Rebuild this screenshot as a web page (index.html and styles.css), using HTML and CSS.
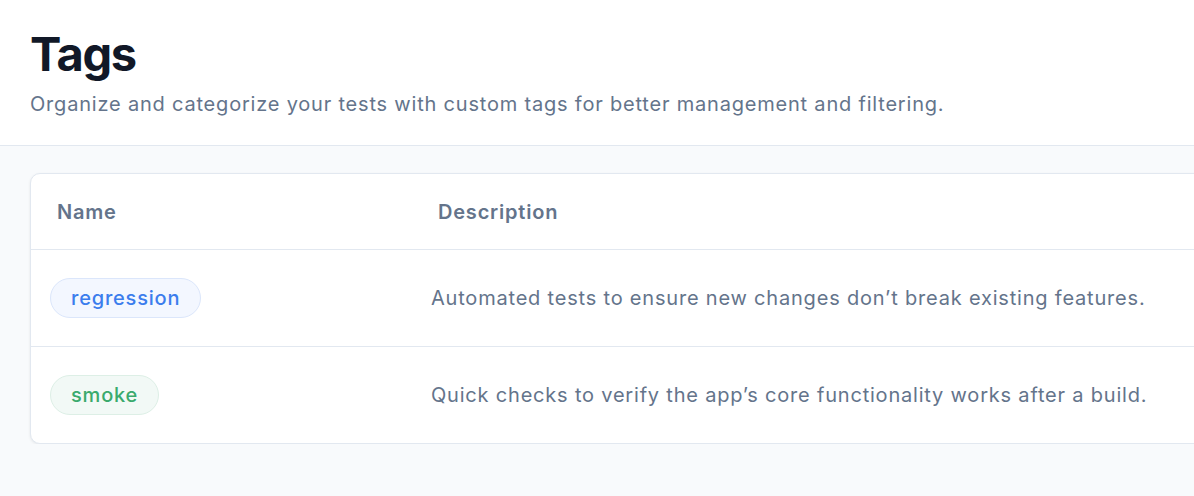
FILE: index.html
```html
<!DOCTYPE html>
<html lang="en">
<head>
    <meta charset="UTF-8">
    <meta name="viewport" content="width=device-width, initial-scale=1.0">
    <title>Tags</title>
    <link rel="stylesheet" href="styles.css">
</head>
<body>
    <header class="page-header">
        <h1>Tags</h1>
        <p>Organize and categorize your tests with custom tags for better management and filtering.</p>
    </header>

    <main class="content">
        <div class="card">
            <table class="tags-table">
                <thead>
                    <tr>
                        <th class="col-name">Name</th>
                        <th>Description</th>
                    </tr>
                </thead>
                <tbody>
                    <tr>
                        <td class="col-name"><span class="tag tag-blue">regression</span></td>
                        <td>Automated tests to ensure new changes don’t break existing features.</td>
                    </tr>
                    <tr>
                        <td class="col-name"><span class="tag tag-green">smoke</span></td>
                        <td>Quick checks to verify the app’s core functionality works after a build.</td>
                    </tr>
                </tbody>
            </table>
        </div>
    </main>
</body>
</html>
```

FILE: styles.css
```css
body {
    margin: 0;
    font-family: Inter, "Noto Sans", sans-serif;
    background-color: #f8fafc;
    color: #0f172a;
    overflow: hidden;
}

.page-header {
    background-color: #fff;
    border-bottom: 1px solid #e2e8f0;
    padding: 26px 30px 0;
    height: 119px;
}

.page-header h1 {
    margin: 0;
    font-size: 47px;
    font-weight: 700;
    letter-spacing: -0.03em;
    line-height: 56px;
    color: #111827;
}

.page-header p {
    margin: 10px 0 0;
    font-size: 20px;
    letter-spacing: 0.8px;
    color: #64748b;
}

.content {
    padding: 27px 0 0 30px;
}

.card {
    width: 1240px;
    background-color: #fff;
    border: 1px solid #e2e8f0;
    border-radius: 10px;
    box-shadow: 0 1px 3px rgba(0, 0, 0, 0.08);
    overflow: hidden;
}

.tags-table {
    width: 100%;
    border-collapse: collapse;
}

.tags-table th {
    text-align: left;
    font-size: 20px;
    font-weight: 600;
    letter-spacing: 0.8px;
    color: #64748b;
    height: 75px;
    padding: 0 26px;
    border-bottom: 1px solid #e2e8f0;
}

.tags-table td {
    font-size: 20px;
    letter-spacing: 0.8px;
    color: #64748b;
    height: 96px;
    padding: 0 19px;
}

.tags-table tbody tr + tr td {
    border-top: 1px solid #e2e8f0;
}

.tags-table .col-name {
    width: 381px;
    box-sizing: border-box;
}

.tag {
    display: inline-block;
    padding: 8px 20px;
    border-radius: 999px;
    font-size: 20px;
    font-weight: 500;
    line-height: 22px;
}

.tag-blue {
    background-color: #f3f7ff;
    border: 1px solid #dbe6fb;
    color: #3b7ded;
}

.tag-green {
    background-color: #f2f9f6;
    border: 1px solid #ddefe6;
    color: #3aaa6d;
}
```
